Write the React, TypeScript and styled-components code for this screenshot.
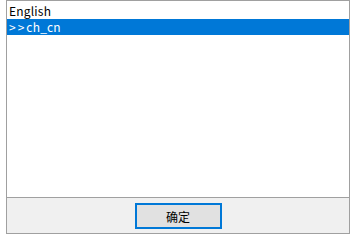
import styled, { createGlobalStyle } from 'styled-components';

const GlobalStyle = createGlobalStyle`
  html, body {
    margin: 0;
    padding: 0;
    background: #ffffff;
  }
  body {
    font-family: "Noto Sans CJK SC", "Liberation Sans", sans-serif;
    font-size: 12px;
  }
`;

const Frame = styled.div`
  width: 344px;
  height: 234px;
  margin-left: 6px;
  display: flex;
  flex-direction: column;
`;

const ListBox = styled.div`
  height: 198px;
  box-sizing: border-box;
  border: 1px solid #a0a0a0;
  background: #ffffff;
  padding-top: 2px;
  display: flex;
  flex-direction: column;
`;

const ListItem = styled.div<{ $selected?: boolean }>`
  height: 16px;
  line-height: 16px;
  padding-left: 2px;
  color: ${(p) => (p.$selected ? '#ffffff' : '#000000')};
  background: ${(p) => (p.$selected ? '#0078d7' : 'transparent')};
  white-space: pre;
  letter-spacing: 0.2px;
`;

const Arrows = styled.span`
  letter-spacing: 2px;
`;

const Footer = styled.div`
  flex: 1;
  border: 1px solid #a0a0a0;
  margin-top: -1px;
  background: #f0f0f0;
  display: flex;
  justify-content: center;
  align-items: center;
`;

const Button = styled.button`
  width: 87px;
  height: 26px;
  border: 2px solid #0078d7;
  background: #e1e1e1;
  font-family: "Noto Sans CJK SC", sans-serif;
  font-size: 12px;
  color: #000000;
  padding: 0;
  margin-top: 1px;
`;

export default function App() {
  return (
    <>
      <GlobalStyle />
      <Frame>
        <ListBox>
          <ListItem>English</ListItem>
          <ListItem $selected>
            <Arrows>{'>>'}</Arrows>ch_cn
          </ListItem>
        </ListBox>
        <Footer>
          <Button>确定</Button>
        </Footer>
      </Frame>
    </>
  );
}
